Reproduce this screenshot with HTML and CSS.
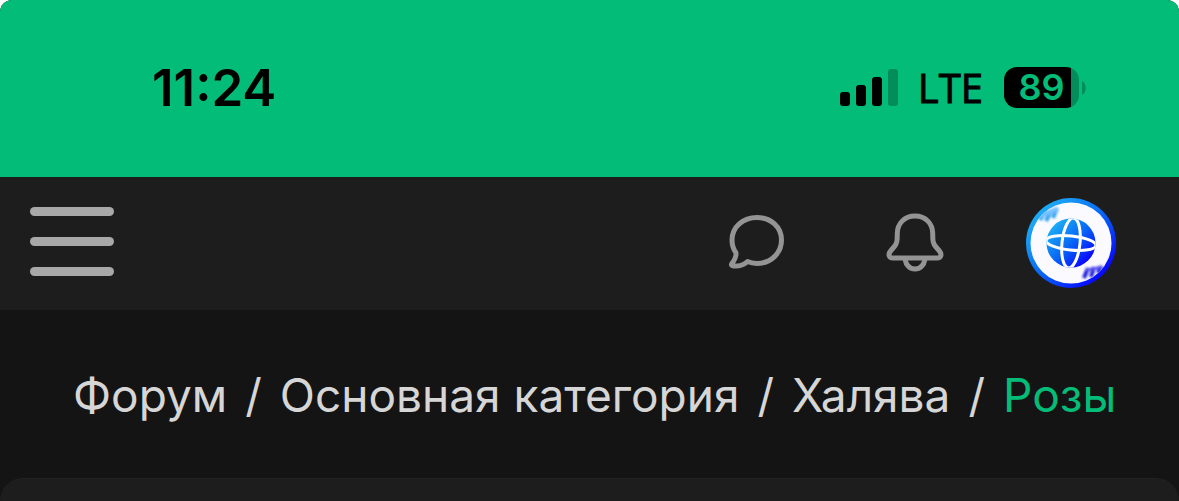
FILE: index.html
```html
<!DOCTYPE html>
<html lang="ru">
<head>
<meta charset="utf-8">
<meta name="viewport" content="width=device-width, initial-scale=1">
<title>Форум</title>
<link rel="stylesheet" href="styles.css">
</head>
<body>
<div class="screen">
  <div class="status">
    <time class="status-time">11:24</time>
    <div class="status-info">
      <svg class="signal" width="58" height="38" viewBox="0 0 58 38" aria-hidden="true">
        <rect x="0" y="23" width="10" height="14" rx="3"/>
        <rect x="16" y="16" width="10" height="21" rx="3"/>
        <rect x="32" y="8" width="10" height="29" rx="3"/>
        <rect x="48" y="0" width="10" height="37" rx="3" opacity=".25"/>
      </svg>
      <span class="network">LTE</span>
      <div class="battery">
        <span class="battery-level">89</span>
        <svg class="battery-tip" width="4" height="14" viewBox="0 0 4 14" aria-hidden="true"><path d="M0 0C5 3 5 11 0 14Z"/></svg>
      </div>
    </div>
  </div>
  <header class="header">
    <button class="menu" type="button" aria-label="Меню"><i class="menu-line"></i><i class="menu-line"></i><i class="menu-line"></i></button>
    <nav class="actions">
      <button class="action" type="button" aria-label="Сообщения">
        <svg width="60" height="60" viewBox="0 0 60 60" fill="none" stroke="#949494" stroke-width="5" stroke-linecap="round" stroke-linejoin="round"><path d="M30 4.500C44 4.500 54.500 14 54.500 27S44 50.500 30 50.500C26.500 50.500 23.500 50 20.500 48.600C16.500 52 11 53.500 6.500 53C4.500 52.800 4 52 5 50.500C7.500 47 9.500 42 8.800 39.500C6.300 36 5 32 5 27C5 14 16 4.500 30 4.500Z"/></svg>
      </button>
      <button class="action" type="button" aria-label="Уведомления">
        <svg width="60" height="60" viewBox="0 0 60 60" fill="none" stroke="#949494" stroke-width="5" stroke-linecap="round" stroke-linejoin="round"><path d="M30 3C19 3 12.500 11 12.300 20C12.200 27 12.500 30 9 34L6 37.500C2.500 41.500 4 45 8 45H52C56 45 57.500 41.500 54 37.500L51 34C47.500 30 47.800 27 47.700 20C47.500 11 41 3 30 3Z"/><path d="M20 46C21 52.500 25 56 30 56S39 52.500 40 46" stroke-linecap="butt"/></svg>
      </button>
      <button class="action" type="button" aria-label="Профиль">
        <svg width="90" height="90" viewBox="0 0 90 90">
          <defs>
            <linearGradient id="ring" x1="0" y1="0" x2="1" y2="1"><stop offset=".1" stop-color="#20b4f5"/><stop offset=".5" stop-color="#0868f5"/><stop offset=".85" stop-color="#0808ff"/></linearGradient>
            <filter id="soft" x="-30%" y="-30%" width="160%" height="160%"><feGaussianBlur stdDeviation="1.200"/></filter>
            <clipPath id="disc"><circle cx="45" cy="45" r="40.500"/></clipPath>
            <clipPath id="ball"><circle cx="45" cy="45" r="24.500"/></clipPath>
          </defs>
          <circle cx="45" cy="45" r="45" fill="url(#ring)"/>
          <circle cx="45" cy="45" r="40.500" fill="#fbfaff"/>
          <g clip-path="url(#disc)" fill="none" stroke-width="4">
            <g filter="url(#soft)"><path d="M14 22L19 14M20 23L25 13M27 20L31 10" stroke="#35a5ee"/><path d="M13 18L32 11" stroke="#73bfff" stroke-width="5"/>
            <path d="M58 80L62 70M65 79L68 69M72 75L75 68" stroke="#2220d8"/><path d="M60 72L77 69" stroke="#5552ed" stroke-width="3"/></g>
          </g>
          <circle cx="45" cy="45" r="24.500" fill="url(#ring)"/>
          <g clip-path="url(#ball)" fill="none" stroke="#fff" stroke-width="3"><ellipse cx="45" cy="45" rx="9" ry="25" transform="rotate(6 45 45)"/><ellipse cx="45" cy="45" rx="25" ry="7" transform="rotate(6 45 45)"/></g>
        </svg>
      </button>
    </nav>
  </header>
  <main class="content">
    <nav class="crumbs" aria-label="Навигация">
      <a class="crumb" href="#">Форум</a><span class="slash">/</span><a class="crumb" href="#">Основная категория</a><span class="slash">/</span><a class="crumb" href="#">Халява</a><span class="slash">/</span><a class="crumb crumb-current" href="#" aria-current="page">Розы</a>
    </nav>
    <section class="card"></section>
  </main>
</div>
</body>
</html>
```
FILE: styles.css
```css
* { box-sizing: border-box; }
body {
  margin: 0;
  background: #fff;
  font-family: Inter, "Liberation Sans", sans-serif;
}
.screen {
  display: flex;
  flex-direction: column;
  min-height: 100vh;
  overflow: hidden;
  border-radius: 12px 12px 0 0;
  background: #141414;
}
.status {
  display: flex;
  align-items: center;
  justify-content: space-between;
  padding: 57px 93px 59px 152px;
  background: #03bc78;
  color: #000;
}
.status-time { font-size: 51px; font-weight: 600; line-height: 61px; }
.status-info { display: flex; align-items: center; }
.network {
  margin: 0 21px 0 20px;
  font-family: "Open Sans", "Noto Sans", sans-serif;
  font-size: 40px;
  -webkit-text-stroke: 1px #000;
  line-height: 48px;
}
.battery { display: flex; align-items: center; gap: 3px; }
.battery-level {
  width: 75px;
  border-radius: 13px;
  background: linear-gradient(to right, #000 67px, #028d5a 67px);
  color: #03bc78;
  font-size: 36px;
  font-weight: 600;
  line-height: 41px;
  text-align: center;
}
.battery-tip { fill: #028d5a; }
.header {
  display: flex;
  align-items: center;
  justify-content: space-between;
  padding: 21px 63px 22px 30px;
  background: #1d1d1d;
}
button { padding: 0; border: 0; background: none; cursor: pointer; }
.menu { display: flex; flex-direction: column; gap: 21px; width: 84px; padding-bottom: 4px; }
.menu-line { height: 9px; border-radius: 5px; background: #a8a8a8; }
.actions { display: flex; align-items: center; gap: 98px; }
.action { display: flex; }
.action:last-child { margin-left: -17px; }
.content { display: flex; flex: 1; flex-direction: column; }
.crumbs {
  display: flex;
  flex-wrap: wrap;
  gap: 0 18px;
  padding: 56px 50px 54px 73px;
  color: #d6d6d6;
  font-size: 46px;
  line-height: 58px;
}
.crumb { color: inherit; text-decoration: none; }
.crumb-current { color: #03bc78; }
.card {
  flex: 1;
  min-height: 23px;
  border-top: 1px solid #222;
  border-radius: 30px 30px 0 0;
  background: #1d1d1d;
}
```
